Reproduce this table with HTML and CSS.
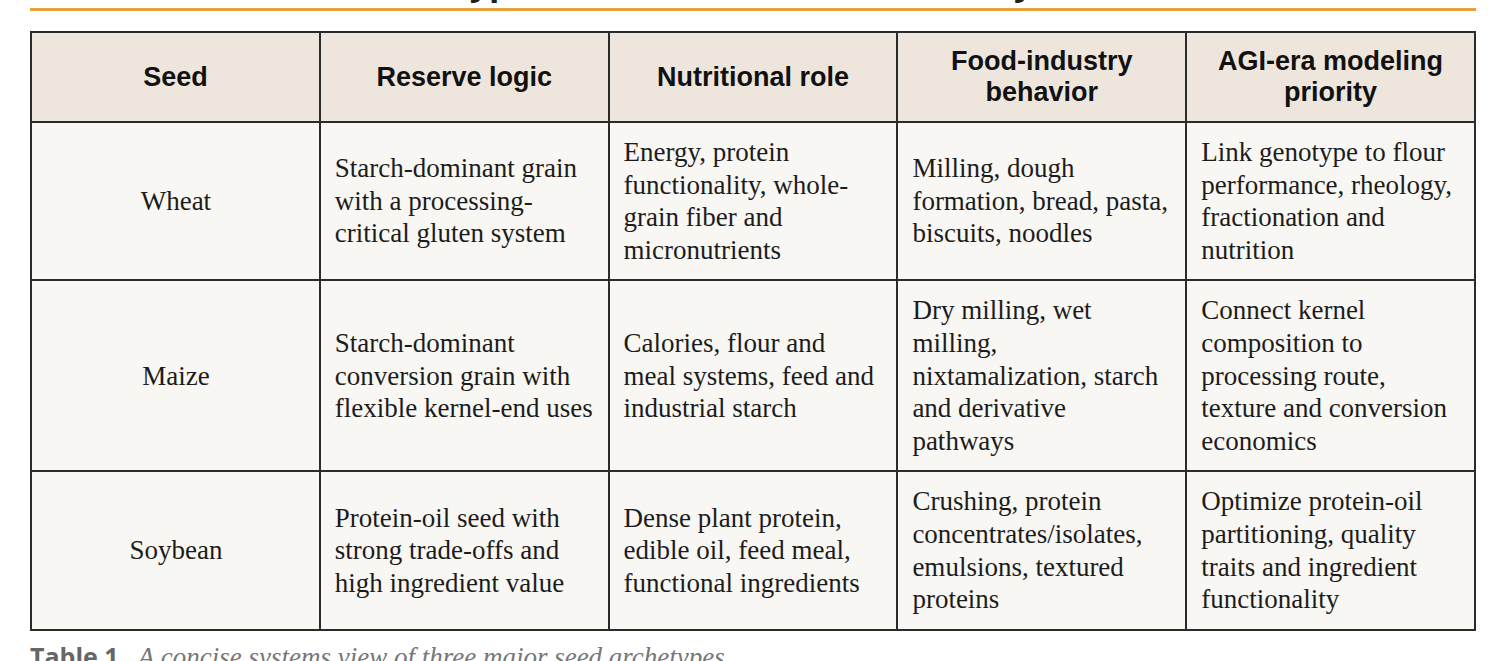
FILE: index.html
```html
<!DOCTYPE html>
<html lang="en">
<head>
<meta charset="utf-8">
<title>Seed archetypes</title>
<link rel="stylesheet" href="styles.css">
</head>
<body>
<div class="page">
  <h2 class="title">The three seed archetypes in food science and industry and in AGI era, where</h2>
  <figure class="figure">
    <table class="seed-table">
      <thead>
        <tr>
          <th>Seed</th>
          <th>Reserve logic</th>
          <th>Nutritional role</th>
          <th>Food-industry behavior</th>
          <th>AGI-era modeling priority</th>
        </tr>
      </thead>
      <tbody>
        <tr>
          <td class="seed">Wheat</td>
          <td>Starch-dominant grain with a processing-critical gluten system</td>
          <td>Energy, protein functionality, whole-grain fiber and micronutrients</td>
          <td>Milling, dough formation, bread, pasta, biscuits, noodles</td>
          <td>Link genotype to flour performance, rheology, fractionation and nutrition</td>
        </tr>
        <tr>
          <td class="seed">Maize</td>
          <td>Starch-dominant conversion grain with flexible kernel-end uses</td>
          <td>Calories, flour and meal systems, feed and industrial starch</td>
          <td>Dry milling, wet milling, nixtamalization, starch and derivative pathways</td>
          <td>Connect kernel composition to processing route, texture and conversion economics</td>
        </tr>
        <tr>
          <td class="seed">Soybean</td>
          <td>Protein-oil seed with strong trade-offs and high ingredient value</td>
          <td>Dense plant protein, edible oil, feed meal, functional ingredients</td>
          <td>Crushing, protein concentrates/isolates, emulsions, textured proteins</td>
          <td>Optimize protein-oil partitioning, quality traits and ingredient functionality</td>
        </tr>
      </tbody>
    </table>
    <figcaption class="caption"><span class="caption-label">Table 1.</span> <em class="caption-text">A concise systems view of three major seed archetypes.</em></figcaption>
  </figure>
</div>
</body>
</html>
```

FILE: styles.css
```css
html, body {
  margin: 0;
  padding: 0;
  background: #ffffff;
}

.page {
  padding: 0 30px;
}

.title {
  margin: -36px 0 0;
  padding: 0 0 8px;
  font-family: "Open Sans", "Liberation Sans", sans-serif;
  font-weight: 700;
  font-size: 34px;
  line-height: 36px;
  color: #1f1f1f;
  text-align: center;
  white-space: nowrap;
  overflow: hidden;
  border-bottom: 3px solid #e8a23a;
}

.figure {
  margin: 20px 0 0;
}

.seed-table {
  width: 100%;
  table-layout: fixed;
  border-collapse: collapse;
  border: 2px solid #2b2b2b;
}

.seed-table th,
.seed-table td {
  border: 2px solid #2b2b2b;
  vertical-align: middle;
}

.seed-table th {
  background: #eee6dd;
  font-family: "Liberation Sans", Arial, sans-serif;
  font-weight: 700;
  font-size: 27px;
  line-height: 31px;
  color: #111111;
  text-align: center;
  padding: 13px 14px;
}

.seed-table td {
  background: #f8f7f3;
  font-family: "Liberation Serif", "Times New Roman", serif;
  font-size: 27px;
  line-height: 32.6px;
  color: #1c1c1c;
  text-align: left;
  padding: 13px 13px 13px 14px;
}

.seed-table td.seed {
  text-align: center;
}

.caption {
  margin: 8px 0 0;
  font-size: 25px;
  line-height: 34px;
  color: #666666;
}

.caption-label {
  font-family: "Open Sans", "Liberation Sans", sans-serif;
  font-weight: 700;
}

.caption-text {
  margin-left: 6px;
  font-family: "Liberation Serif", "Times New Roman", serif;
  font-style: italic;
  font-size: 27px;
  color: #777777;
}
```
